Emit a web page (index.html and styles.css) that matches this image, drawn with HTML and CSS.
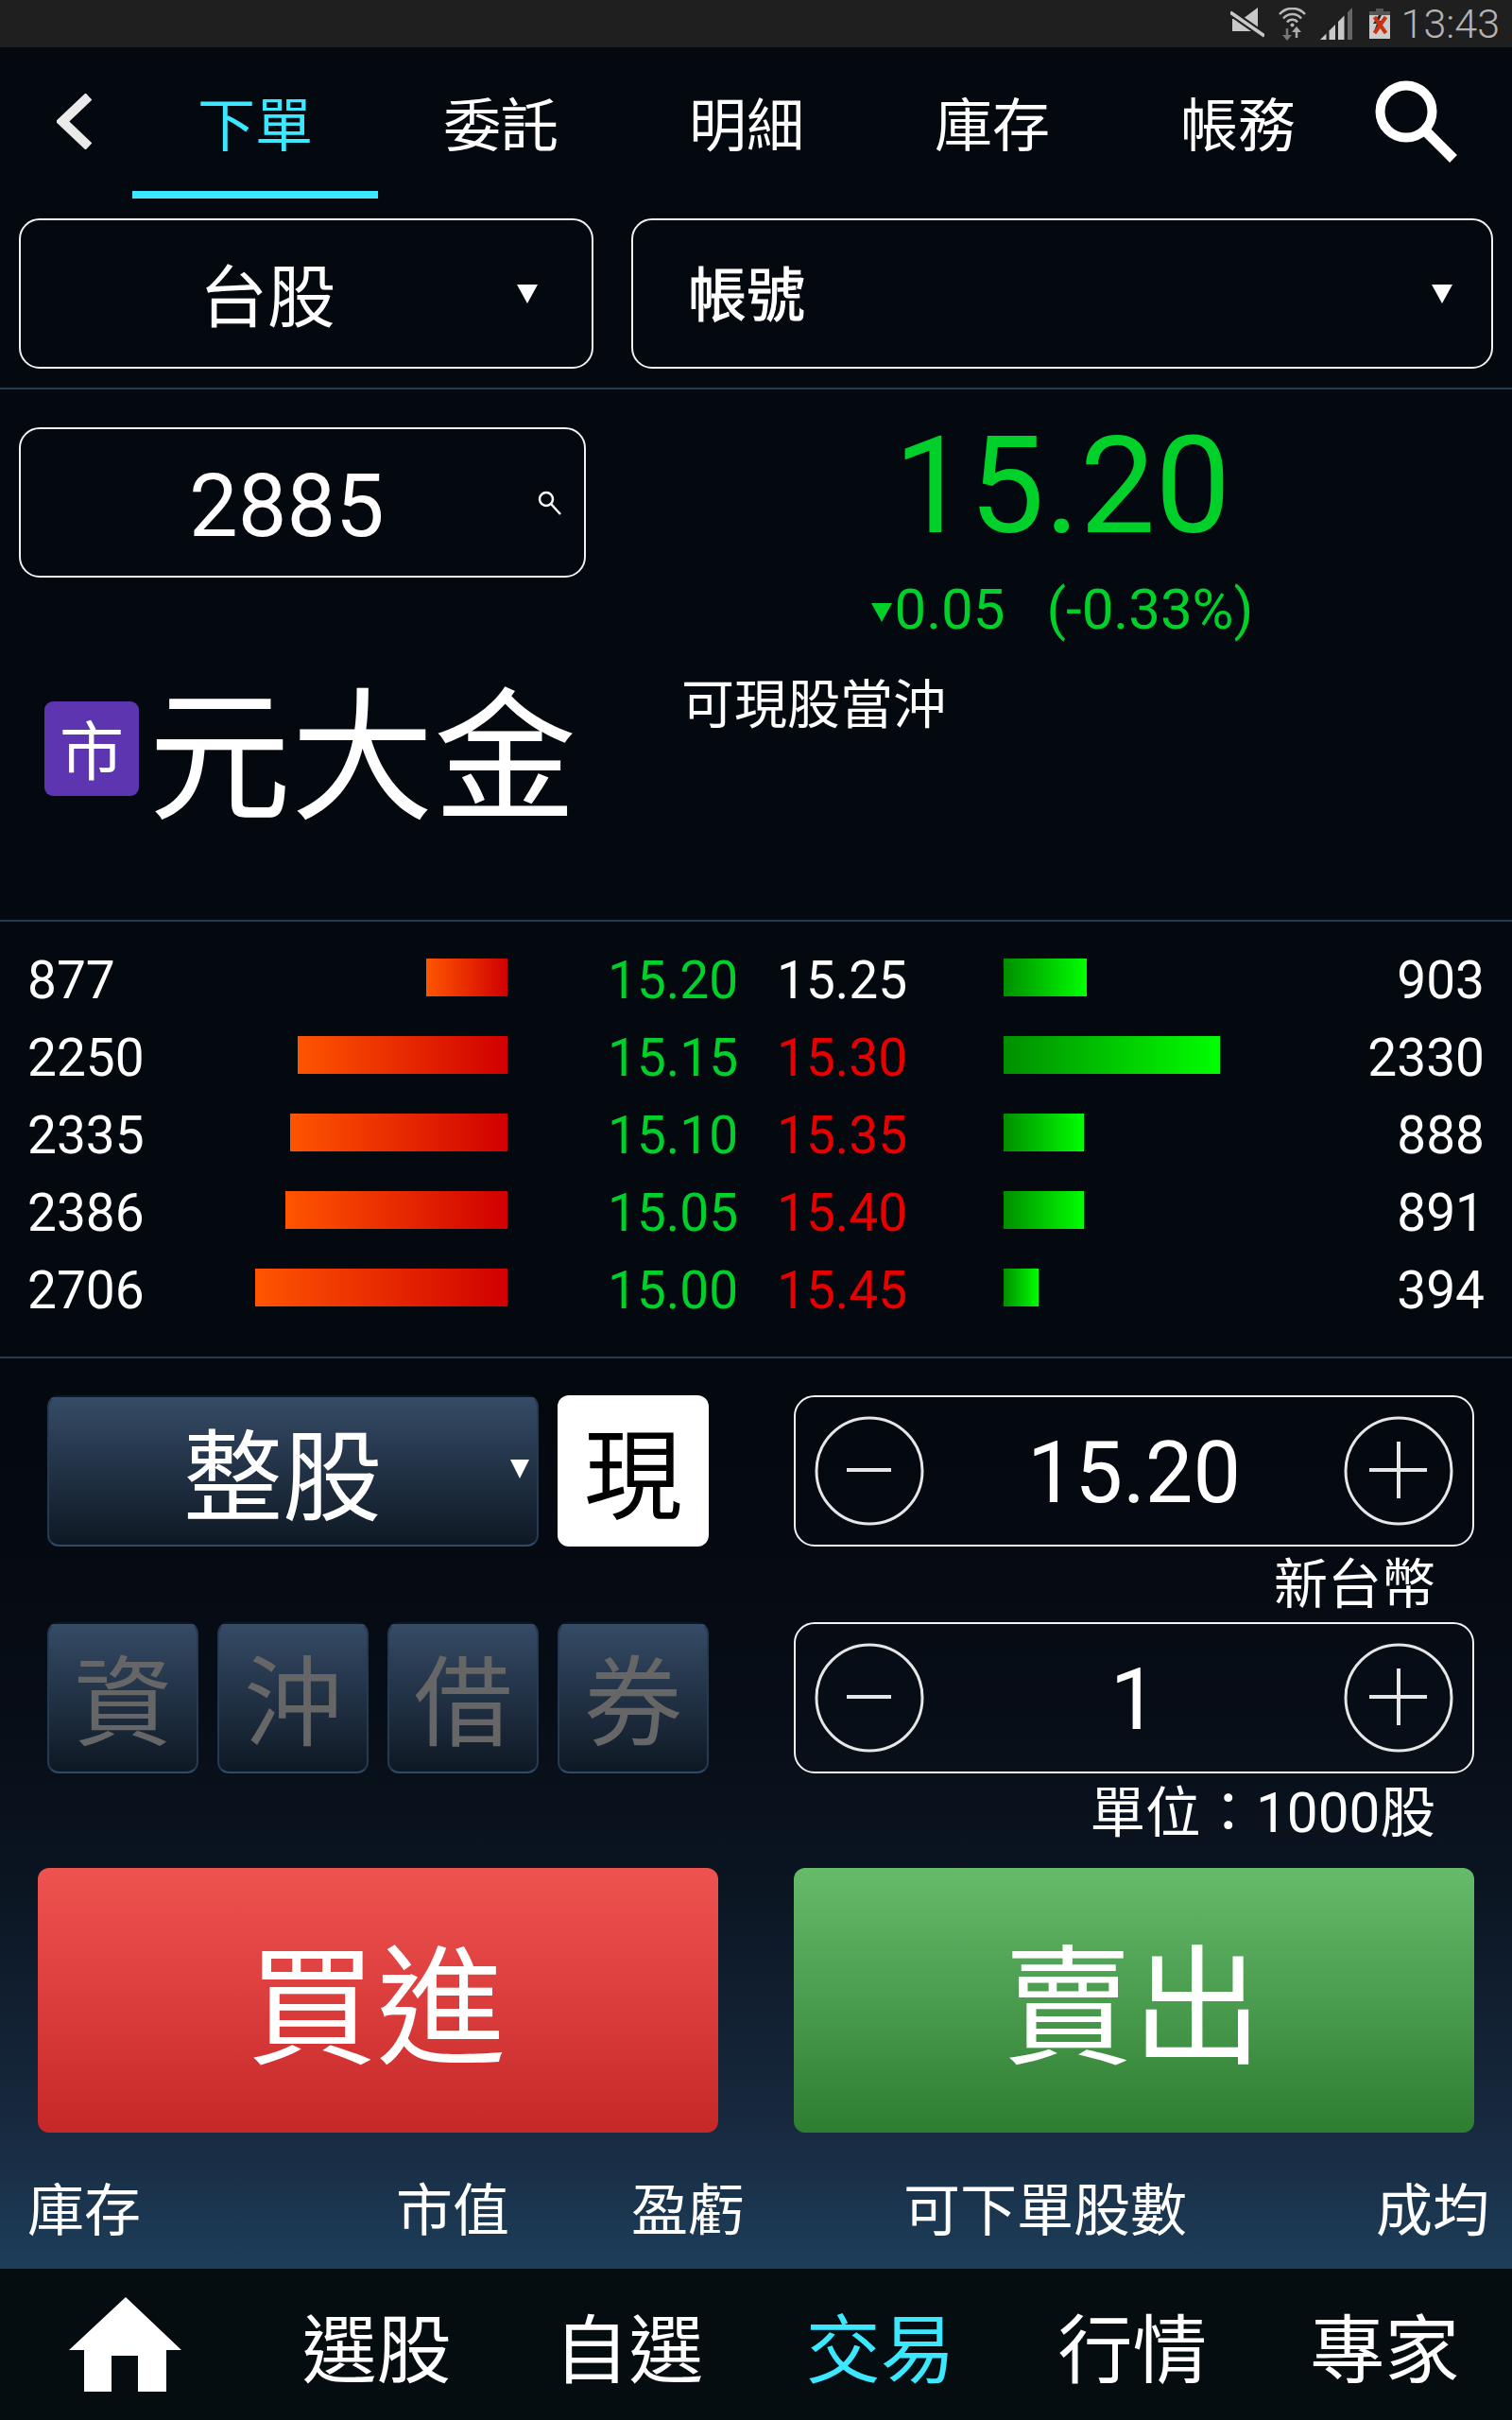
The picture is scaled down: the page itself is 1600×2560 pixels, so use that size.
FILE: index.html
```html
<!DOCTYPE html>
<html lang="zh-TW">
<head>
    <meta charset="utf-8">
    <title>下單</title>
    <link rel="stylesheet" href="styles.css">
</head>
<body>
<div class="page">
    <div class="status-bar">
        <svg width="36" height="34" viewBox="0 0 36 34">
            <polygon points="2,12 13,12 29,0 29,25 13,25 2,25" fill="#c8c8c8"/>
            <line x1="0" y1="5" x2="36" y2="30" stroke="#1f1f1f" stroke-width="8"/>
            <line x1="0" y1="5" x2="36" y2="30" stroke="#c8c8c8" stroke-width="3.5"/>
        </svg>
        <svg width="29" height="35" viewBox="0 0 29 35" fill="none">
            <path d="M1 7 A18 18 0 0 1 28 7" stroke="#b8b8b8" stroke-width="2.5"/>
            <path d="M5 11.5 A12.5 12.5 0 0 1 24 11.5" stroke="#b8b8b8" stroke-width="2.5"/>
            <path d="M9 15.5 A7 7 0 0 1 20 15.5" stroke="#b8b8b8" stroke-width="2.5"/>
            <circle cx="14.5" cy="18.5" r="2" fill="#b8b8b8"/>
            <line x1="9" y1="22" x2="9" y2="31" stroke="#777" stroke-width="2.5"/>
            <polygon points="4,29 14,29 9,35" fill="#777"/>
            <line x1="19" y1="24" x2="19" y2="32" stroke="#aaa" stroke-width="2.5"/>
            <polygon points="14,26 24,26 19,20" fill="#aaa"/>
        </svg>
        <svg width="34" height="34" viewBox="0 0 34 34">
            <polygon points="0,34 6.5,27.5 6.5,34" fill="#c8c8c8"/>
            <polygon points="9.5,34 9.5,24.5 16,18 16,34" fill="#c8c8c8"/>
            <polygon points="19,34 19,15 25.5,8.5 25.5,34" fill="#c8c8c8"/>
            <polygon points="29,34 29,5 34,0 34,34" fill="#666"/>
        </svg>
        <svg class="battery" width="22" height="32" viewBox="0 0 22 32">
            <rect x="7" y="0" width="8" height="4" fill="#555"/>
            <rect x="0" y="3" width="22" height="29" fill="#cdcdcd"/>
            <rect x="0" y="3" width="22" height="4" fill="#555"/>
            <polygon points="10,7 4,16 8,16 5,24 14,13 10,13 13,7" fill="#222"/>
            <line x1="5.5" y1="9" x2="17.5" y2="26" stroke="#c9330f" stroke-width="4"/>
            <line x1="17.5" y1="9" x2="5.5" y2="26" stroke="#c9330f" stroke-width="4"/>
        </svg>
        <span class="clock">13:43</span>
    </div>

    <div class="top-tabs">
        <div class="back-cell">
            <svg width="37" height="59" viewBox="0 0 37 59" fill="none">
                <polyline points="34,3 6,29.5 34,56" stroke="#eaeaea" stroke-width="10"/>
            </svg>
        </div>
        <div class="tab tab-active">下單</div>
        <div class="tab">委託</div>
        <div class="tab">明細</div>
        <div class="tab">庫存</div>
        <div class="tab">帳務</div>
        <svg class="search-big" width="88" height="88" viewBox="0 0 88 88" fill="none">
            <circle cx="33" cy="33" r="27.5" stroke="#fff" stroke-width="10"/>
            <line x1="54" y1="54" x2="83" y2="83" stroke="#fff" stroke-width="11"/>
        </svg>
    </div>

    <div class="select-row">
        <div class="select-box market-select">
            <span class="market-text">台股</span>
            <span class="tri"></span>
        </div>
        <div class="select-box account-select">
            <span class="account-text">帳號</span>
            <span class="tri"></span>
        </div>
    </div>

    <div class="quote">
        <div class="quote-left">
            <div class="code-box">
                <span class="code-text">2885</span>
                <svg class="search-small" width="25" height="26" viewBox="0 0 25 26" fill="none">
                    <circle cx="9" cy="9" r="7" stroke="#fff" stroke-width="2.5"/>
                    <line x1="14" y1="14" x2="24" y2="25" stroke="#fff" stroke-width="2.5"/>
                </svg>
            </div>
            <div class="name-row">
                <span class="badge">市</span>
                <span class="stock-name">元大金</span>
            </div>
        </div>
        <div class="quote-right">
            <div class="big-price">15.20</div>
            <div class="change-row">
                <span class="tri tri-green"></span><span>0.05</span><span class="change-pct">(-0.33%)</span>
            </div>
            <div class="day-trade">可現股當沖</div>
        </div>
    </div>

    <div class="book">
        <div class="book-row">
            <span>877</span>
            <div class="bar-cell-left"><div class="bar bar-red" style="width:86px"></div></div>
            <span class="px px-green">15.20</span>
            <span class="px">15.25</span>
            <div class="bar bar-green" style="width:88px"></div>
            <span class="qty-right">903</span>
        </div>
        <div class="book-row">
            <span>2250</span>
            <div class="bar-cell-left"><div class="bar bar-red" style="width:222px"></div></div>
            <span class="px px-green">15.15</span>
            <span class="px px-red">15.30</span>
            <div class="bar bar-green" style="width:229px"></div>
            <span class="qty-right">2330</span>
        </div>
        <div class="book-row">
            <span>2335</span>
            <div class="bar-cell-left"><div class="bar bar-red" style="width:230px"></div></div>
            <span class="px px-green">15.10</span>
            <span class="px px-red">15.35</span>
            <div class="bar bar-green" style="width:85px"></div>
            <span class="qty-right">888</span>
        </div>
        <div class="book-row">
            <span>2386</span>
            <div class="bar-cell-left"><div class="bar bar-red" style="width:235px"></div></div>
            <span class="px px-green">15.05</span>
            <span class="px px-red">15.40</span>
            <div class="bar bar-green" style="width:85px"></div>
            <span class="qty-right">891</span>
        </div>
        <div class="book-row">
            <span>2706</span>
            <div class="bar-cell-left"><div class="bar bar-red" style="width:267px"></div></div>
            <span class="px px-green">15.00</span>
            <span class="px px-red">15.45</span>
            <div class="bar bar-green" style="width:37px"></div>
            <span class="qty-right">394</span>
        </div>
    </div>

    <div class="trade">
        <div class="order-type">
            <div class="type-btn lot-btn">
                <span class="lot-text">整股</span>
                <span class="tri tri-small"></span>
            </div>
            <div class="type-btn cash-btn">現</div>
            <div class="type-btn off-btn">資</div>
            <div class="type-btn off-btn">沖</div>
            <div class="type-btn off-btn">借</div>
            <div class="type-btn off-btn">券</div>
        </div>
        <div class="steppers">
            <div class="stepper">
                <svg width="116" height="116" viewBox="0 0 116 116" fill="none">
                    <circle cx="58" cy="58" r="56" stroke="#e6e6e6" stroke-width="3"/>
                    <line x1="34" y1="57" x2="81" y2="57" stroke="#e6e6e6" stroke-width="4"/>
                </svg>
                <span class="step-value">15.20</span>
                <svg width="116" height="116" viewBox="0 0 116 116" fill="none">
                    <circle cx="58" cy="58" r="56" stroke="#e6e6e6" stroke-width="3"/>
                    <line x1="27" y1="57" x2="88" y2="57" stroke="#e6e6e6" stroke-width="4"/>
                    <line x1="58" y1="27" x2="58" y2="87" stroke="#e6e6e6" stroke-width="4"/>
                </svg>
            </div>
            <div class="step-unit">新台幣</div>
            <div class="stepper">
                <svg width="116" height="116" viewBox="0 0 116 116" fill="none">
                    <circle cx="58" cy="58" r="56" stroke="#e6e6e6" stroke-width="3"/>
                    <line x1="34" y1="57" x2="81" y2="57" stroke="#e6e6e6" stroke-width="4"/>
                </svg>
                <span class="step-value">1</span>
                <svg width="116" height="116" viewBox="0 0 116 116" fill="none">
                    <circle cx="58" cy="58" r="56" stroke="#e6e6e6" stroke-width="3"/>
                    <line x1="27" y1="57" x2="88" y2="57" stroke="#e6e6e6" stroke-width="4"/>
                    <line x1="58" y1="27" x2="58" y2="87" stroke="#e6e6e6" stroke-width="4"/>
                </svg>
            </div>
            <div class="step-unit step-unit-lot">單位：1000股</div>
        </div>
        <div class="action-btn buy-btn">買進</div>
        <div class="action-btn sell-btn">賣出</div>
    </div>

    <div class="info-row">
        <span>庫存</span>
        <span>市值</span>
        <span>盈虧</span>
        <span>可下單股數</span>
        <span>成均</span>
    </div>

    <div class="bottom-nav">
        <div class="nav-item">
            <svg width="120" height="100" viewBox="0 0 120 100">
                <path d="M60 0 L119 56 L103 56 L103 100 L73 100 L73 62 L45 62 L45 100 L16 100 L16 56 L0 56 Z" fill="#fff"/>
            </svg>
        </div>
        <div class="nav-item nav-text">選股</div>
        <div class="nav-item nav-text">自選</div>
        <div class="nav-item nav-text nav-active">交易</div>
        <div class="nav-item nav-text">行情</div>
        <div class="nav-item nav-text">專家</div>
    </div>
</div>
</body>
</html>
```

FILE: styles.css
```css
*{
    box-sizing:border-box;
}
body{
    margin:0;
    font-family:Roboto, "Noto Sans CJK TC", sans-serif;
    color:white;
    background-color:#04080f;
}
.page{
    width:1600px;
    height:2560px;
    overflow:hidden;
    background:linear-gradient(to bottom, #04080f 0, #04080f 1500px, #070d16 1800px, #0a1420 1980px, #182a40 2256px, #1d3e5a 2400px);
}

/* status bar */
.status-bar{
    height:50px;
    background-color:#1f1f1f;
    display:flex;
    justify-content:flex-end;
    align-items:center;
    gap:15px;
    padding-right:13px;
}
.battery{
    margin-left:3px;
}
.clock{
    font-size:43px;
    font-weight:300;
    color:#b4b4b4;
    margin-left:-3px;
}

/* top tabs */
.top-tabs{
    height:160px;
    display:flex;
    align-items:stretch;
}
.back-cell{
    width:140px;
    padding-left:60px;
    padding-top:49px;
}
.tab{
    width:260px;
    font-size:61px;
    line-height:60px;
    text-align:center;
    padding-top:54px;
    border-bottom:8px solid transparent;
}
.tab-active{
    color:#3be8ff;
    border-bottom-color:#3be8ff;
}
.search-big{
    margin-left:15px;
    margin-top:35px;
}

/* selects */
.select-row{
    margin-top:21px;
    padding:0 20px 20px;
    display:grid;
    grid-template-columns:608px 912px;
    column-gap:40px;
    border-bottom:2px solid #263a50;
}
.select-box{
    height:159px;
    border:2px solid #f2f2f2;
    border-radius:22px;
    display:flex;
    align-items:center;
    justify-content:space-between;
}
.market-select{
    padding-left:189px;
    padding-right:57px;
}
.account-select{
    padding-left:58px;
    padding-right:41px;
}
.market-text{
    font-size:72px;
    margin-bottom:4px;
}
.account-text{
    font-size:62px;
    margin-bottom:6px;
    -webkit-text-stroke:1px white;
}
.tri{
    width:0;
    height:0;
    border-left:11px solid transparent;
    border-right:11px solid transparent;
    border-top:20px solid white;
}

/* quote */
.quote{
    height:563px;
    padding:40px 20px 0;
    display:grid;
    grid-template-columns:608px 912px;
    column-gap:40px;
    border-bottom:2px solid #263a50;
}
.code-box{
    width:600px;
    height:159px;
    border:2px solid #f2f2f2;
    border-radius:22px;
    display:flex;
    align-items:center;
    justify-content:space-between;
    padding-left:178px;
    padding-right:24px;
}
.code-text{
    font-size:92px;
    padding-top:8px;
}
.name-row{
    margin-top:114px;
    padding-left:27px;
    display:flex;
    align-items:flex-start;
}
.badge{
    width:100px;
    height:100px;
    margin-top:17px;
    background-color:#5e35b1;
    border-radius:9px;
    font-size:68px;
    line-height:110px;
    text-align:center;
}
.stock-name{
    font-size:151px;
    line-height:148px;
    margin-left:10px;
    padding-top:5px;
}
.big-price{
    font-size:142px;
    line-height:120px;
    margin-top:3px;
    color:#00d02a;
    text-align:center;
}
.change-row{
    margin-top:35px;
    height:70px;
    font-size:60px;
    line-height:70px;
    color:#00d02a;
    display:flex;
    justify-content:center;
    align-items:center;
}
.tri-green{
    border-top-color:#00d02a;
    margin-right:3px;
    margin-top:6px;
}
.change-pct{
    margin-left:44px;
}
.day-trade{
    margin-top:36px;
    padding-left:53px;
    font-size:56px;
    line-height:60px;
}

/* order book */
.book{
    height:462px;
    padding:18px 0 0 29px;
    border-bottom:2px solid #263a50;
}
.book-row{
    height:82px;
    display:grid;
    grid-template-columns:101px 407px 285px 240px 240px 269px;
    align-items:center;
    font-size:55px;
    line-height:76px;
}
.book-row span{
    padding-top:6px;
}
.bar-cell-left{
    display:flex;
    justify-content:flex-end;
}
.bar{
    height:40px;
}
.bar-red{
    background:linear-gradient(to right, #ff5500, #d00000);
}
.bar-green{
    background:linear-gradient(to right, #008f00, #00ff00);
}
.px-green{
    color:#00d02a;
    padding-left:106px;
}
.px-red{
    color:#e60000;
}
.qty-right{
    text-align:right;
}

/* order entry */
.trade{
    padding:39px 40px 0;
    display:grid;
    grid-template-columns:720px 720px;
    column-gap:80px;
    row-gap:20px;
}
.order-type{
    padding:0 10px;
    display:grid;
    grid-template-columns:repeat(4, 160px);
    grid-template-rows:160px 160px;
    gap:80px 20px;
}
.type-btn{
    background:linear-gradient(to bottom, #354b66, #0e1824);
    border:2px solid transparent;
    border-bottom-color:#2f4a68;
    border-left-color:#243a52;
    border-right-color:#243a52;
    border-radius:12px;
    font-size:104px;
    padding-bottom:5px;
    display:flex;
    align-items:center;
    justify-content:center;
}
.lot-btn{
    grid-column:span 3;
    justify-content:space-between;
    padding-left:142px;
    padding-right:8px;
}
.lot-text{
    font-size:105px;
}
.tri-small{
    border-left-width:10px;
    border-right-width:10px;
    border-top-width:20px;
}
.cash-btn{
    background:white;
    border:none;
    color:black;
}
.off-btn{
    color:#666666;
}
.stepper{
    height:160px;
    border:2px solid #f2f2f2;
    border-radius:22px;
    display:flex;
    align-items:center;
    justify-content:space-between;
    padding:0 20px;
}
.step-value{
    font-size:90px;
    padding-top:5px;
}
.step-unit{
    height:80px;
    font-size:57px;
    line-height:82px;
    text-align:right;
    padding-right:41px;
}
.step-unit-lot{
    font-size:58.5px;
    line-height:85px;
}
.action-btn{
    height:280px;
    border-radius:12px;
    font-size:137px;
    padding-bottom:6px;
    padding-right:3px;
    display:flex;
    align-items:center;
    justify-content:center;
}
.buy-btn{
    background:linear-gradient(to bottom, #ef5350, #c62828);
}
.sell-btn{
    background:linear-gradient(to bottom, #66bb6a, #2e7d32);
}

/* info row */
.info-row{
    height:144px;
    padding-left:29px;
    padding-top:54px;
    display:grid;
    grid-template-columns:390px 249px 288px 500px auto;
    font-size:60px;
    line-height:60px;
}

/* bottom nav */
.bottom-nav{
    height:160px;
    background-color:#060d10;
    display:grid;
    grid-template-columns:repeat(6, 1fr);
    align-items:center;
    text-align:center;
    font-size:79px;
}
.nav-item{
    display:flex;
    justify-content:center;
    align-items:center;
}
.nav-text{
    padding-right:3px;
}
.nav-active{
    color:#3be8ff;
}
```
